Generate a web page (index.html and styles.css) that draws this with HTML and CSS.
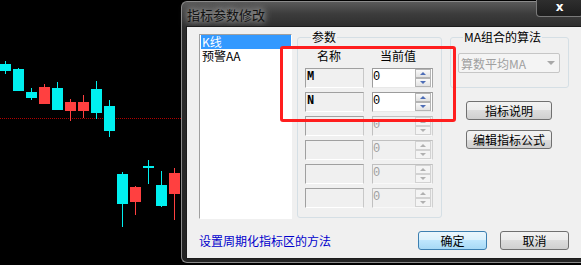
FILE: index.html
```html
<!DOCTYPE html>
<html lang="zh-CN">
<head>
  <meta charset="UTF-8">
  <title>指标参数修改</title>
  <link rel="stylesheet" href="styles.css">
</head>
<body>
  <!-- K-line chart behind the dialog -->
  <svg class="chart" width="181" height="265" viewBox="0 0 181 265">
    <line x1="0" y1="118.5" x2="181" y2="118.5" stroke="#b00000" stroke-dasharray="1 1"/>
    <g stroke-width="1">
      <line x1="5.5" y1="61" x2="5.5" y2="74" stroke="#00f0f0"/><rect x="0" y="64" width="11" height="7" fill="#00f0f0"/>
      <line x1="18.5" y1="68" x2="18.5" y2="91" stroke="#00f0f0"/><rect x="13" y="69" width="11" height="22" fill="#00f0f0"/>
      <line x1="31.5" y1="88" x2="31.5" y2="100" stroke="#00f0f0"/><rect x="26" y="92" width="11" height="6" fill="#00f0f0"/>
      <line x1="44.5" y1="84" x2="44.5" y2="104" stroke="#ff4040"/><rect x="39" y="87" width="11" height="17" fill="#ff4040"/>
      <line x1="57.5" y1="82" x2="57.5" y2="110" stroke="#00f0f0"/><rect x="52" y="88" width="11" height="22" fill="#00f0f0"/>
      <line x1="70.5" y1="99" x2="70.5" y2="121" stroke="#ff4040"/><rect x="65" y="102" width="11" height="9" fill="#ff4040"/>
      <line x1="83.5" y1="95" x2="83.5" y2="118" stroke="#ff4040"/><rect x="78" y="102" width="11" height="9" fill="#ff4040"/>
      <line x1="96.5" y1="81" x2="96.5" y2="119" stroke="#00f0f0"/><rect x="91" y="89" width="11" height="24" fill="#00f0f0"/>
      <line x1="109.5" y1="100" x2="109.5" y2="137" stroke="#00f0f0"/><rect x="104" y="106" width="11" height="25" fill="#00f0f0"/>
      <line x1="122.5" y1="172" x2="122.5" y2="227" stroke="#00f0f0"/><rect x="117" y="174" width="11" height="30" fill="#00f0f0"/>
      <line x1="135.5" y1="186" x2="135.5" y2="215" stroke="#ff4040"/><rect x="130" y="187" width="11" height="15" fill="#ff4040"/>
      <line x1="148.5" y1="160" x2="148.5" y2="184" stroke="#00f0f0"/><rect x="143" y="166" width="11" height="2" fill="#00f0f0"/>
      <line x1="161.5" y1="171" x2="161.5" y2="207" stroke="#00f0f0"/><rect x="156" y="185" width="11" height="21" fill="#00f0f0"/>
      <line x1="174.5" y1="168" x2="174.5" y2="220" stroke="#ff4040"/><rect x="169" y="173" width="11" height="21" fill="#ff4040"/>
    </g>
  </svg>

  <!-- Dialog -->
  <div class="dialog">
    <div class="titlebar">
      <span class="title">指标参数修改</span>
      <span class="close-btn">x</span>
    </div>

    <div class="client">
      <div class="main-row">
        <ul class="listbox">
          <li class="selected">K线</li>
          <li>预警AA</li>
        </ul>

        <fieldset class="group params">
          <legend>参数</legend>
          <div class="param-head">
            <span class="head-name">名称</span>
            <span class="head-value">当前值</span>
          </div>
          <div class="param-row">
            <div class="name-box">M</div>
            <div class="value-box"><span>0</span><div class="spin"><i class="up"></i><i class="down"></i></div></div>
          </div>
          <div class="param-row">
            <div class="name-box">N</div>
            <div class="value-box"><span>0</span><div class="spin"><i class="up"></i><i class="down"></i></div></div>
          </div>
          <div class="param-row off">
            <div class="name-box"></div>
            <div class="value-box"><span>0</span><div class="spin"><i class="up"></i><i class="down"></i></div></div>
          </div>
          <div class="param-row off">
            <div class="name-box"></div>
            <div class="value-box"><span>0</span><div class="spin"><i class="up"></i><i class="down"></i></div></div>
          </div>
          <div class="param-row off">
            <div class="name-box"></div>
            <div class="value-box"><span>0</span><div class="spin"><i class="up"></i><i class="down"></i></div></div>
          </div>
          <div class="param-row off">
            <div class="name-box"></div>
            <div class="value-box"><span>0</span><div class="spin"><i class="up"></i><i class="down"></i></div></div>
          </div>
        </fieldset>

        <div class="right-col">
          <fieldset class="group ma">
            <legend>MA组合的算法</legend>
            <div class="combo">
              <span>算数平均MA</span>
              <i class="combo-arrow"></i>
            </div>
          </fieldset>
          <button class="btn">指标说明</button>
          <button class="btn">编辑指标公式</button>
        </div>
      </div>

      <div class="bottom-row">
        <a class="link">设置周期化指标区的方法</a>
        <button class="btn default">确定</button>
        <button class="btn">取消</button>
      </div>
    </div>
  </div>

  <!-- red annotation box -->
  <div class="mark"></div>
</body>
</html>
```

FILE: styles.css
```css
/* Page */
body {
  margin: 0;
  width: 581px;
  height: 265px;
  overflow: hidden;
  background: #000;
  display: flex;
  position: relative;
  font-family: "Noto Sans CJK SC", "Liberation Sans", sans-serif;
  font-size: 12px;
}

.chart {
  flex-shrink: 0;
  display: block;
}

/* Dialog frame */
.dialog {
  flex: 1;
  margin-top: 1px;
  height: 262px;
  box-sizing: border-box;
  border: 1px solid #8b8b8b;
  border-right: 0;
  border-radius: 6px 0 0 6px;
  background: linear-gradient(#5a5a5a 0, #3c3c3c 12px, #2c2c2c 26px, #242424);
  padding: 0 0 3px 4px;
  display: flex;
  flex-direction: column;
}

.titlebar {
  height: 24px;
  display: flex;
  align-items: flex-start;
}

.title {
  margin: 5px 0 0 1px;
  font-size: 13px;
  line-height: 16px;
  color: #111;
  text-shadow: 0 0 6px #c8c8c8, 0 0 10px #aaa;
}

.close-btn {
  margin: -2px 0 0 auto;
  width: 47px;
  height: 17px;
  box-sizing: border-box;
  border: 1px solid #7a7a7a;
  border-top: 0;
  border-radius: 0 0 4px 4px;
  background: linear-gradient(#2e2e2e, #1e1e1e);
  color: #fff;
  font-family: "DejaVu Sans", sans-serif;
  font-weight: bold;
  font-size: 12px;
  line-height: 15px;
  text-align: center;
}

.client {
  flex: 1;
  background: #f0f0f0;
  border: 1px solid #1c1c1c;
  border-right: 0;
  padding: 3px 14px 0 12px;
  display: flex;
  flex-direction: column;
}

.main-row {
  display: flex;
  align-items: flex-start;
}

/* List */
.listbox {
  flex-shrink: 0;
  list-style: none;
  margin: 4px 0 0 0;
  padding: 0 0 0 1px;
  width: 93px;
  height: 185px;
  box-sizing: border-box;
  background: #fff;
  border: 1px solid;
  border-color: #a0a0a0 #fff #fff #a0a0a0;
}

.listbox li {
  height: 14px;
  line-height: 14px;
  padding-left: 1px;
  color: #000;
}

.listbox li.selected {
  background: #3399ff;
  color: #fff;
}

/* Group boxes */
.group {
  flex-shrink: 0;
  margin: 0;
  padding: 0 7px;
  min-width: 0;
  box-sizing: border-box;
  border: 1px solid #d5dfe5;
  border-radius: 3px;
}

.group legend {
  padding: 0 1px;
  line-height: 14px;
  color: #000;
}

.params {
  margin-left: 5px;
  width: 145px;
  height: 188px;
}

.params legend {
  margin-left: 6px;
}

.param-head {
  display: flex;
  padding-top: 5px;
  margin-bottom: 5px;
  line-height: 14px;
}

.head-name {
  width: 67px;
  padding-left: 12px;
  box-sizing: border-box;
}

.head-value {
  padding-left: 8px;
}

.param-row {
  display: flex;
  gap: 8px;
  margin-bottom: 4px;
}

.name-box {
  width: 59px;
  height: 20px;
  box-sizing: border-box;
  border: 1px solid;
  border-color: #a0a0a0 #c8c8c8 #fff #a0a0a0;
  background: #f0f0f0;
  padding: 2px 0 0 1px;
  font-family: "Liberation Mono", monospace;
  font-weight: bold;
  font-size: 12px;
  line-height: 12px;
}

.value-box {
  width: 61px;
  height: 20px;
  box-sizing: border-box;
  border: 1px solid;
  border-color: #9c9c9c #a8a8a8 #e8e8e8 #9c9c9c;
  background: #fff;
  display: flex;
  font-family: "Liberation Mono", monospace;
  font-size: 12px;
  line-height: 12px;
}

.value-box span {
  padding: 2px 0 0 0;
  flex: 1;
}

.off .value-box {
  background: #f0f0f0;
  border-color: #c0c0c0 #d0d0d0 #f8f8f8 #c0c0c0;
  color: #a0a0a0;
}

/* Spin buttons */
.spin {
  width: 16px;
  margin-right: 1px;
  display: flex;
  flex-direction: column;
}

.spin i {
  height: 9px;
  box-sizing: border-box;
  border: 1px solid #b4b4b4;
  background: linear-gradient(#fafafa, #e2e2e2);
  display: flex;
  align-items: center;
  justify-content: center;
}

.spin i::after {
  content: "";
  border-left: 3px solid transparent;
  border-right: 3px solid transparent;
}

.spin .up::after {
  border-bottom: 3px solid #4d6db6;
}

.spin .down::after {
  border-top: 3px solid #4d6db6;
}

.off .spin i {
  border-color: #d2d2d2;
  background: #f4f4f4;
}

.off .spin .up::after {
  border-bottom-color: #b0b0b0;
}

.off .spin .down::after {
  border-top-color: #b0b0b0;
}

/* Right column */
.right-col {
  flex-shrink: 0;
  margin-left: 8px;
  width: 119px;
  display: flex;
  flex-direction: column;
}

.ma {
  width: 119px;
  height: 58px;
}

.ma legend {
  margin-left: 5px;
}

.combo {
  margin-top: 9px;
  width: 102px;
  height: 20px;
  box-sizing: border-box;
  border: 1px solid #c6c6c6;
  border-radius: 2px;
  background: #f4f4f4;
  color: #a0a0a0;
  display: flex;
  align-items: center;
  padding: 0 4px 0 2px;
}

.combo span {
  flex: 1;
}

.combo-arrow {
  border-left: 4px solid transparent;
  border-right: 4px solid transparent;
  border-top: 4px solid #a8a8a8;
}

/* Buttons */
.btn {
  flex-shrink: 0;
  width: 86px;
  height: 19px;
  box-sizing: border-box;
  margin: 0;
  padding: 0;
  border: 1px solid #707070;
  border-radius: 3px;
  background: linear-gradient(#f2f2f2 0, #ebebeb 50%, #dddddd 50%, #cfcfcf 100%);
  font-family: "Noto Sans CJK SC", sans-serif;
  font-size: 12px;
  line-height: 16px;
  color: #000;
}

.right-col .btn {
  margin-left: 16px;
  margin-top: 10px;
}

.right-col .ma + .btn {
  margin-top: 13px;
}

/* Bottom row */
.bottom-row {
  margin-top: 12px;
  display: flex;
  align-items: center;
  gap: 13px;
}

.link {
  flex: 1;
  color: #0000cc;
  line-height: 14px;
}

.bottom-row .btn {
  width: 69px;
}

.btn.default {
  border-color: #3c7fb1;
  background: linear-gradient(#eaf6fd 0, #d9f0fc 50%, #bee6fd 50%, #a7d9f5 100%);
}

/* Annotation */
.mark {
  position: absolute;
  left: 280px;
  top: 46px;
  width: 176px;
  height: 76px;
  box-sizing: border-box;
  border: 3px solid #ff1e1e;
  border-radius: 3px;
}
```
